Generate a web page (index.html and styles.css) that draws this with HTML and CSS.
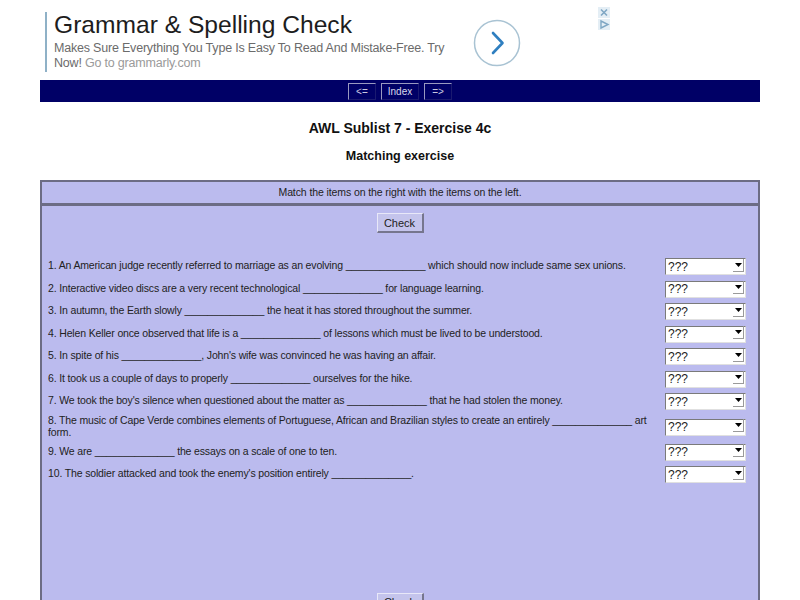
FILE: index.html
```html
<!DOCTYPE html>
<html>
<head>
<meta charset="utf-8">
<title>AWL Sublist 7 - Exercise 4c</title>
<link rel="stylesheet" href="styles.css">
</head>
<body>
<div class="ad">
  <div class="ad-text">
    <div class="ad-title">Grammar &amp; Spelling Check</div>
    <div class="ad-sub">Makes Sure Everything You Type Is Easy To Read And Mistake-Free. Try Now! <span class="ad-link">Go to grammarly.com</span></div>
  </div>
  <div class="ad-circle">
    <svg width="48" height="48" viewBox="0 0 48 48"><circle cx="24" cy="24" r="22.5" fill="#fff" stroke="#a9c3d3" stroke-width="1.5"/><path d="M20 14 L29.5 24 L20 34" fill="none" stroke="#2f7fc0" stroke-width="2.6" stroke-linecap="round" stroke-linejoin="round"/></svg>
  </div>
  <div class="ad-icons">
    <svg width="12" height="24" viewBox="0 0 12 24"><rect x="0" y="0" width="12" height="11" fill="#e4eef5"/><path d="M3 2.5 L9 8.5 M9 2.5 L3 8.5" stroke="#7fa7c4" stroke-width="1.6"/><rect x="0" y="12" width="12" height="11" fill="#e4eef5"/><path d="M3 14 L10 17.5 L3 21 Z" fill="none" stroke="#7fa7c4" stroke-width="1.4"/></svg>
  </div>
</div>

<div class="nav">
  <span class="nav-btn">&lt;=</span>
  <span class="nav-btn nav-index">Index</span>
  <span class="nav-btn">=&gt;</span>
</div>

<h1 class="title">AWL Sublist 7 - Exercise 4c</h1>
<h2 class="subtitle">Matching exercise</h2>

<div class="exercise">
  <div class="ex-head">Match the items on the right with the items on the left.</div>
  <div class="ex-body">
    <div class="btn-row"><button class="check">Check</button></div>
    <div class="items">
      <div class="item"><div class="q">1. An American judge recently referred to marriage as an evolving ______________ which should now include same sex unions.</div><div class="sel"><select><option>???</option></select><span class="arrow"><svg width="7" height="4" viewBox="0 0 7 4"><path d="M0 0 H7 L3.5 4 Z" fill="#000"/></svg></span></div></div>
      <div class="item"><div class="q">2. Interactive video discs are a very recent technological ______________ for language learning.</div><div class="sel"><select><option>???</option></select><span class="arrow"><svg width="7" height="4" viewBox="0 0 7 4"><path d="M0 0 H7 L3.5 4 Z" fill="#000"/></svg></span></div></div>
      <div class="item"><div class="q">3. In autumn, the Earth slowly ______________ the heat it has stored throughout the summer.</div><div class="sel"><select><option>???</option></select><span class="arrow"><svg width="7" height="4" viewBox="0 0 7 4"><path d="M0 0 H7 L3.5 4 Z" fill="#000"/></svg></span></div></div>
      <div class="item"><div class="q">4. Helen Keller once observed that life is a ______________ of lessons which must be lived to be understood.</div><div class="sel"><select><option>???</option></select><span class="arrow"><svg width="7" height="4" viewBox="0 0 7 4"><path d="M0 0 H7 L3.5 4 Z" fill="#000"/></svg></span></div></div>
      <div class="item"><div class="q">5. In spite of his ______________, John's wife was convinced he was having an affair.</div><div class="sel"><select><option>???</option></select><span class="arrow"><svg width="7" height="4" viewBox="0 0 7 4"><path d="M0 0 H7 L3.5 4 Z" fill="#000"/></svg></span></div></div>
      <div class="item"><div class="q">6. It took us a couple of days to properly ______________ ourselves for the hike.</div><div class="sel"><select><option>???</option></select><span class="arrow"><svg width="7" height="4" viewBox="0 0 7 4"><path d="M0 0 H7 L3.5 4 Z" fill="#000"/></svg></span></div></div>
      <div class="item"><div class="q">7. We took the boy's silence when questioned about the matter as ______________ that he had stolen the money.</div><div class="sel"><select><option>???</option></select><span class="arrow"><svg width="7" height="4" viewBox="0 0 7 4"><path d="M0 0 H7 L3.5 4 Z" fill="#000"/></svg></span></div></div>
      <div class="item"><div class="q">8. The music of Cape Verde combines elements of Portuguese, African and Brazilian styles to create an entirely ______________ art form.</div><div class="sel"><select><option>???</option></select><span class="arrow"><svg width="7" height="4" viewBox="0 0 7 4"><path d="M0 0 H7 L3.5 4 Z" fill="#000"/></svg></span></div></div>
      <div class="item"><div class="q">9. We are ______________ the essays on a scale of one to ten.</div><div class="sel"><select><option>???</option></select><span class="arrow"><svg width="7" height="4" viewBox="0 0 7 4"><path d="M0 0 H7 L3.5 4 Z" fill="#000"/></svg></span></div></div>
      <div class="item"><div class="q">10. The soldier attacked and took the enemy's position entirely ______________.</div><div class="sel"><select><option>???</option></select><span class="arrow"><svg width="7" height="4" viewBox="0 0 7 4"><path d="M0 0 H7 L3.5 4 Z" fill="#000"/></svg></span></div></div>
    </div>
    <div class="btn-row bottom"><button class="check">Check</button></div>
  </div>
</div>
</body>
</html>
```

FILE: styles.css
```css
html, body {
  margin: 0;
  padding: 0;
  background: #ffffff;
  font-family: "Liberation Sans", Arial, sans-serif;
  color: #222;
}

.ad {
  box-sizing: border-box;
  height: 80px;
  padding: 12px 0 0 45px;
  display: flex;
  align-items: flex-start;
}

.ad-text {
  box-sizing: border-box;
  width: 420px;
  height: 60px;
  border-left: 2px solid #8fb1c7;
  padding-left: 7px;
}

.ad-title {
  font-size: 24.6px;
  line-height: 26px;
  color: #1d1d1d;
  white-space: nowrap;
}

.ad-sub {
  margin-top: 3px;
  font-size: 12.5px;
  line-height: 15px;
  color: #6b6b6b;
  width: 400px;
  letter-spacing: -0.2px;
}

.ad-link {
  color: #9a9a9a;
}

.ad-circle {
  margin: 7px 0 0 8px;
  width: 48px;
  height: 48px;
}

.ad-circle svg, .ad-icons svg {
  display: block;
}

.ad-icons {
  margin: -5px 0 0 77px;
}

.nav {
  margin: 0 40px;
  height: 22px;
  background: #000066;
  display: flex;
  justify-content: center;
  align-items: center;
  gap: 5px;
}

.nav-btn {
  box-sizing: border-box;
  height: 17px;
  padding: 0 7px;
  font-size: 10px;
  line-height: 15px;
  color: #c8c8e0;
  border-top: 1px solid #9a9ac0;
  border-left: 1px solid #9a9ac0;
  border-right: 1px solid #1a1a70;
  border-bottom: 1px solid #1a1a70;
}

.nav-index {
  padding: 0 6px;
  color: #d8d8ea;
}

.title {
  margin: 17px 0 0;
  text-align: center;
  font-size: 14px;
  line-height: 18px;
  font-weight: bold;
  color: #111;
}

.subtitle {
  margin: 11px 0 0;
  text-align: center;
  font-size: 12.5px;
  line-height: 16px;
  font-weight: bold;
  color: #111;
}

.exercise {
  margin: 16px 40px 0;
  border: 2px solid #6c6c84;
  background: #bbbbee;
}

.ex-head {
  height: 21px;
  line-height: 21px;
  text-align: center;
  font-size: 10.5px;
  letter-spacing: -0.1px;
  color: #222;
  border-bottom: 3px solid #6c6c84;
}

.ex-body {
  padding: 7px 12px 0 6px;
}

.btn-row {
  display: flex;
  justify-content: center;
  padding-left: 6px;
}

.check {
  box-sizing: border-box;
  width: 47px;
  height: 20px;
  padding: 0;
  font-family: "Liberation Sans", Arial, sans-serif;
  font-size: 11px;
  color: #222;
  background: #c4c4ec;
  border-top: 1px solid #e8e8f8;
  border-left: 1px solid #e8e8f8;
  border-right: 2px solid #76768e;
  border-bottom: 2px solid #76768e;
}

.items {
  margin-top: 21px;
}

.item {
  box-sizing: border-box;
  min-height: 22.5px;
  padding: 2px 0;
  display: flex;
  align-items: center;
}

.q {
  flex: 1;
  font-size: 10.5px;
  letter-spacing: -0.15px;
  line-height: 12px;
  color: #222;
}

.sel {
  position: relative;
  margin-left: 10px;
  width: 81px;
  height: 17px;
}

.sel select {
  -webkit-appearance: none;
  appearance: none;
  box-sizing: border-box;
  width: 81px;
  height: 17px;
  margin: 0;
  padding: 0 0 0 2px;
  font-family: "Liberation Sans", Arial, sans-serif;
  font-size: 12px;
  color: #222;
  background: #ffffff;
  border-top: 1px solid #7a7a7a;
  border-left: 1px solid #7a7a7a;
  border-right: 1px solid #e0e0e0;
  border-bottom: 1px solid #e0e0e0;
  border-radius: 0;
}

.arrow {
  position: absolute;
  top: 2px;
  right: 2px;
  box-sizing: border-box;
  width: 11px;
  height: 13px;
  display: flex;
  align-items: center;
  justify-content: center;
  border-right: 1px solid #9a9a9a;
  border-bottom: 1px solid #9a9a9a;
  pointer-events: none;
}

.arrow svg {
  display: block;
}

.bottom {
  margin-top: 108px;
  padding-bottom: 20px;
}
```
